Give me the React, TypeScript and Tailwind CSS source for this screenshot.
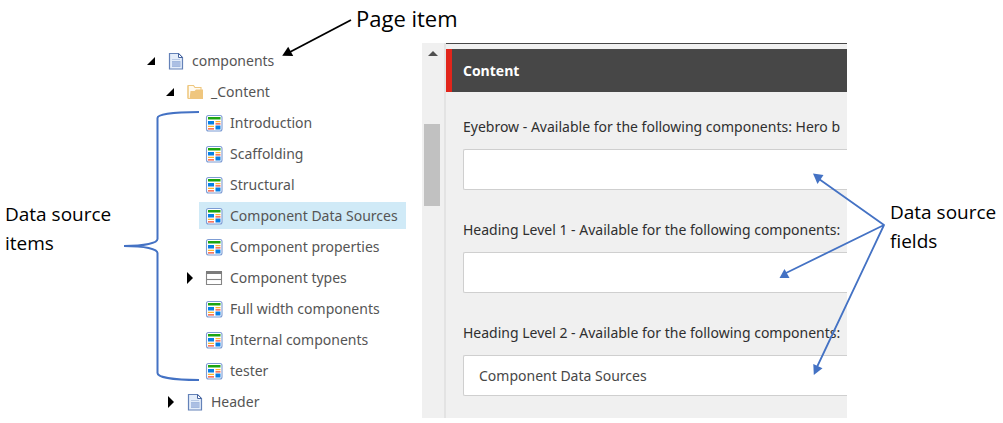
import clsx from 'clsx';

type IconName = 'page' | 'folder' | 'data' | 'section';

interface TreeItem {
  label: string;
  icon: IconName;
  level: 0 | 1 | 2;
  arrow?: 'open' | 'closed';
  selected?: boolean;
}

const treeItems: TreeItem[] = [
  { label: 'components', icon: 'page', level: 0, arrow: 'open' },
  { label: '_Content', icon: 'folder', level: 1, arrow: 'open' },
  { label: 'Introduction', icon: 'data', level: 2 },
  { label: 'Scaffolding', icon: 'data', level: 2 },
  { label: 'Structural', icon: 'data', level: 2 },
  { label: 'Component Data Sources', icon: 'data', level: 2, selected: true },
  { label: 'Component properties', icon: 'data', level: 2 },
  { label: 'Component types', icon: 'section', level: 2, arrow: 'closed' },
  { label: 'Full width components', icon: 'data', level: 2 },
  { label: 'Internal components', icon: 'data', level: 2 },
  { label: 'tester', icon: 'data', level: 2 },
  { label: 'Header', icon: 'page', level: 1, arrow: 'closed' },
];

const fields = [
  { id: 'eyebrow', label: 'Eyebrow - Available for the following components: Hero b', value: '' },
  { id: 'heading-1', label: 'Heading Level 1 - Available for the following components:', value: '' },
  { id: 'heading-2', label: 'Heading Level 2 - Available for the following components:', value: 'Component Data Sources' },
];

const levelPadding = {
  0: 'pl-0',
  1: 'pl-[19px]',
  2: 'pl-[38px]',
};

function ItemIcon({ name }: { name: IconName }) {
  if (name === 'page') {
    return (
      <svg width="18" height="18" viewBox="0 0 18 18" fill="none">
        <path d="M2.500 1.500h9l4 4v11.500h-13z" fill="#e4edfa" stroke="#6482b8" strokeWidth="1.2" />
        <path d="M11.500 1.500v4h4z" fill="#fff" stroke="#47659f" />
        <path d="M5 7.500h8" stroke="#b9cae6" />
        <path d="M5 9h8.500v6H5z" fill="#a3b9df" />
        <path d="M5 11h8.500M5 13h8.500" stroke="#bccceb" strokeWidth=".7" />
      </svg>
    );
  }
  if (name === 'folder') {
    return (
      <svg width="18" height="18" viewBox="0 0 18 18" fill="none">
        <path d="M2 15.500V2.500h5.500l1.500 2h6V7" fill="#fffaf0" stroke="#eec77f" strokeWidth="1.1" />
        <path d="M4.500 8h4L10 6.500h7v9.500H3.500z" fill="#efc67e" />
        <path d="M2 3v12.500h3" stroke="#eec77f" />
      </svg>
    );
  }
  if (name === 'section') {
    return (
      <svg width="18" height="18" viewBox="0 0 18 18" fill="none">
        <path d="M1.500 3.500h15v12h-15z" fill="#fff" stroke="#858585" strokeWidth="1.1" />
        <path d="M1 2h16v3H1z" fill="#7c7c7c" />
        <path d="M1 10.500h16" stroke="#858585" strokeWidth="1.1" />
      </svg>
    );
  }
  return (
    <svg width="18" height="18" viewBox="0 0 18 18" fill="none">
      <rect x="1.500" y="1.500" width="15.500" height="15.500" rx="2" fill="#fff" stroke="#7d9cd4" strokeWidth="1.1" />
      <path d="M3 3h12.500v2.500H3z" fill="#1ca510" />
      <path d="M3 7h6v3.500H3zM10.500 11.500h5v4h-5z" fill="#067fe6" />
      <path d="M10.500 7h5v1.300h-5zM3 11.700h6V13H3z" fill="#ffb72c" />
      <path d="M10.500 9.200h5v1.300h-5zM3 14.200h6v1.300H3z" fill="#f4492c" />
    </svg>
  );
}

function ContentTree() {
  return (
    <nav className="pt-[47px]">
      <ul className="flex flex-col gap-1">
        {treeItems.map((item) => (
          <li key={item.label} className={clsx('flex', levelPadding[item.level])}>
            <button className="w-[19px] flex items-center pl-1" aria-label={item.arrow && `Toggle ${item.label}`} disabled={!item.arrow}>
              {item.arrow && (
                <svg className="shrink-0" width="10" height="12" viewBox="0 0 10 12" fill="#000">
                  <path d={item.arrow === 'open' ? 'M9 2v8H1z' : 'M3 0l6 6-6 6z'} />
                </svg>
              )}
            </button>
            <a
              href="#"
              className={clsx(
                "h-[27px] flex items-center gap-[7px] pl-1.5 pr-2 font-['Noto_Sans',sans-serif] text-sm text-[#555] whitespace-nowrap",
                item.selected && 'bg-[#d0eaf7]'
              )}
            >
              <ItemIcon name={item.icon} />
              {item.label}
            </a>
          </li>
        ))}
      </ul>
    </nav>
  );
}

function Scrollbar() {
  return (
    <div className="w-6 shrink-0 flex flex-col pl-0.5 bg-[#f0f0f0] border-r-2 border-[#e3e3e3]">
      <svg className="mt-2 ml-1" width="10" height="5" viewBox="0 0 10 5" fill="#505050">
        <path d="M5 0l5 5H0z" />
      </svg>
      <div className="mt-[68px] w-4 h-[82px] bg-[#c1c1c1]" />
    </div>
  );
}

function Editor() {
  return (
    <main className="flex-1 min-w-0 flex mt-[43px] bg-[#f0f0f0] overflow-hidden">
      <Scrollbar />
      <section className="flex-1 min-w-0 border-t border-[#474747]">
        <h2 className="mt-[5px] h-[43px] flex items-center pl-[11px] border-l-6 border-[#e1251b] bg-[#474747] text-sm font-bold text-white">
          Content
        </h2>
        <div className="flex flex-col gap-[30px] pt-[25px] pb-[21px] pl-[17px]">
          {fields.map((field) => (
            <div key={field.id} className="flex flex-col gap-3 font-['Noto_Sans',sans-serif] text-sm">
              <label htmlFor={field.id} className="text-[#2f2f2f] whitespace-nowrap">
                {field.label}
              </label>
              <input
                id={field.id}
                defaultValue={field.value}
                className="h-[41px] border border-r-0 border-[#cfcfcf] rounded-l-xs bg-white px-[15px] text-[#474747]"
              />
            </div>
          ))}
        </div>
      </section>
    </main>
  );
}

// Curly bracket that groups the data source items
function Bracket() {
  return (
    <svg className="absolute left-[123px] top-[110px] pointer-events-none" width="78" height="272" viewBox="0 0 78 272" fill="none">
      <path
        d="M76 2C48 2 34.500 5 34.500 8V129C34.500 133 22 136 1 136C22 136 34.500 139 34.500 143V263C34.500 267 49 270 76 270"
        stroke="#4472c4"
        strokeWidth="2"
      />
    </svg>
  );
}

function PageItemNote() {
  return (
    <div className="absolute left-[281px] top-[3px] flex items-start pointer-events-none">
      <svg className="mt-[15px]" width="75" height="40" viewBox="0 0 75 40" fill="none">
        <path d="M70 2L9 34" stroke="#000" strokeWidth="1.800" />
        <path d="M1.200 37.800l6-9 5 9.200z" fill="#000" />
      </svg>
      <p className="text-[22px] leading-[30px] text-black">Page item</p>
    </div>
  );
}

function FieldArrows() {
  return (
    <svg className="absolute right-[118px] top-[170px] pointer-events-none" width="108" height="208" viewBox="0 0 108 208" fill="none">
      <path d="M42 9L107 55L9 103M107 55L40 197" stroke="#4472c4" strokeWidth="1.800" strokeLinejoin="round" />
      <g fill="#4472c4">
        <path d="M36 3.500l10.500 1.500-6 9z" />
        <path d="M2.500 108l5-9 5 9z" />
        <path d="M36.800 205l-.5-11 9.200 4.200z" />
      </g>
    </svg>
  );
}

export default function App() {
  return (
    <div className="relative flex min-h-screen bg-white pb-[5px] font-['Open_Sans',sans-serif]">
      <aside className="w-[142px] shrink-0 pt-[200px] pl-[5px] text-[19px] leading-[29px] text-black">
        <p>Data source items</p>
      </aside>
      <div className="w-[280px] shrink-0">
        <ContentTree />
      </div>
      <Editor />
      <aside className="w-[156px] shrink-0 pt-[198px] pl-[43px] text-[19px] leading-[29px] text-black">
        <p>Data source fields</p>
      </aside>
      <Bracket />
      <PageItemNote />
      <FieldArrows />
    </div>
  );
}
